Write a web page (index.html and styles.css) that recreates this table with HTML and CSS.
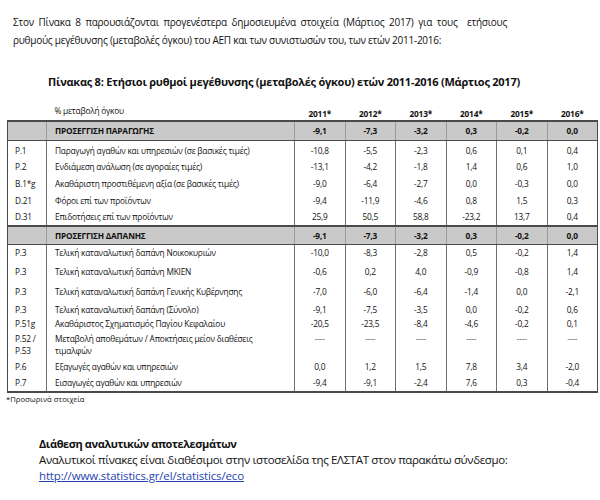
FILE: index.html
```html
<!DOCTYPE html>
<html lang="el">
<head>
<meta charset="utf-8">
<title>Πίνακας 8</title>
<link rel="stylesheet" href="styles.css">
</head>
<body>
<main class="page">
  <p class="intro">Στον Πίνακα 8 παρουσιάζονται προγενέστερα δημοσιευμένα στοιχεία (Μάρτιος 2017) για τους &nbsp;ετήσιους ρυθμούς μεγέθυνσης (μεταβολές όγκου) του ΑΕΠ και των συνιστωσών του, των ετών 2011-2016:</p>
  <h1 class="title">Πίνακας 8: Ετήσιοι ρυθμοί μεγέθυνσης (μεταβολές όγκου) ετών 2011-2016 (Μάρτιος 2017)</h1>
  <table class="growth">
    <colgroup>
      <col class="c-code"><col class="c-label"><col class="c-y"><col class="c-y"><col class="c-y"><col class="c-y"><col class="c-y"><col class="c-y">
    </colgroup>
    <thead>
      <tr class="head">
        <th></th><th class="unit">% μεταβολή όγκου</th>
        <th>2011*</th><th>2012*</th><th>2013*</th><th>2014*</th><th>2015*</th><th>2016*</th>
      </tr>
    </thead>
    <tbody>
      <tr class="group h18"><td></td><td class="label">ΠΡΟΣΕΓΓΙΣΗ ΠΑΡΑΓΩΓΗΣ</td><td>-9,1</td><td>-7,3</td><td>-3,2</td><td>0,3</td><td>-0,2</td><td>0,0</td></tr>
      <tr class="h19"><td class="code">P.1</td><td class="label">Παραγωγή αγαθών και υπηρεσιών (σε βασικές τιμές)</td><td>-10,8</td><td>-5,5</td><td>-2,3</td><td>0,6</td><td>0,1</td><td>0,4</td></tr>
      <tr class="h14"><td class="code">P.2</td><td class="label">Ενδιάμεση ανάλωση (σε αγοραίες τιμές)</td><td>-13,1</td><td>-4,2</td><td>-1,8</td><td>1,4</td><td>0,6</td><td>1,0</td></tr>
      <tr class="h19"><td class="code">B.1*g</td><td class="label">Ακαθάριστη προστιθέμενη αξία (σε βασικές τιμές)</td><td>-9,0</td><td>-6,4</td><td>-2,7</td><td>0,0</td><td>-0,3</td><td>0,0</td></tr>
      <tr class="h16"><td class="code">D.21</td><td class="label">Φόροι επί των προϊόντων</td><td>-9,4</td><td>-11,9</td><td>-4,6</td><td>0,8</td><td>1,5</td><td>0,3</td></tr>
      <tr class="h16"><td class="code">D.31</td><td class="label">Επιδοτήσεις επί των προϊόντων</td><td>25,9</td><td>50,5</td><td>58,8</td><td>-23,2</td><td>13,7</td><td>0,4</td></tr>
      <tr class="group h17"><td></td><td class="label">ΠΡΟΣΕΓΓΙΣΗ ΔΑΠΑΝΗΣ</td><td>-9,1</td><td>-7,3</td><td>-3,2</td><td>0,3</td><td>-0,2</td><td>0,0</td></tr>
      <tr class="h16"><td class="code">P.3</td><td class="label">Τελική καταναλωτική δαπάνη Νοικοκυριών</td><td>-10,0</td><td>-8,3</td><td>-2,8</td><td>0,5</td><td>-0,2</td><td>1,4</td></tr>
      <tr class="h21"><td class="code">P.3</td><td class="label">Τελική καταναλωτική δαπάνη ΜΚΙΕΝ</td><td>-0,6</td><td>0,2</td><td>4,0</td><td>-0,9</td><td>-0,8</td><td>1,4</td></tr>
      <tr class="h20"><td class="code">P.3</td><td class="label">Τελική καταναλωτική δαπάνη Γενικής Κυβέρνησης</td><td>-7,0</td><td>-6,0</td><td>-6,4</td><td>-1,4</td><td>0,0</td><td>-2,1</td></tr>
      <tr class="h15"><td class="code">P.3</td><td class="label">Τελική καταναλωτική δαπάνη (Σύνολο)</td><td>-9,1</td><td>-7,5</td><td>-3,5</td><td>0,0</td><td>-0,2</td><td>0,6</td></tr>
      <tr class="h14"><td class="code">P.51g</td><td class="label">Ακαθάριστος Σχηματισμός Παγίου Κεφαλαίου</td><td>-20,5</td><td>-23,5</td><td>-8,4</td><td>-4,6</td><td>-0,2</td><td>0,1</td></tr>
      <tr class="h28 top"><td class="code">P.52 /<br>P.53</td><td class="label">Μεταβολή αποθεμάτων / Αποκτήσεις μείον διαθέσεις τιμαλφών</td><td class="dash">----</td><td class="dash">----</td><td class="dash">----</td><td class="dash">----</td><td class="dash">----</td><td class="dash">----</td></tr>
      <tr class="h15"><td class="code">P.6</td><td class="label">Εξαγωγές αγαθών και υπηρεσιών</td><td>0,0</td><td>1,2</td><td>1,5</td><td>7,8</td><td>3,4</td><td>-2,0</td></tr>
      <tr class="h17 last"><td class="code">P.7</td><td class="label">Εισαγωγές αγαθών και υπηρεσιών</td><td>-9,4</td><td>-9,1</td><td>-2,4</td><td>7,6</td><td>0,3</td><td>-0,4</td></tr>
    </tbody>
  </table>
  <p class="note">*Προσωρινά στοιχεία</p>
  <section class="results">
    <h2 class="results-title">Διάθεση αναλυτικών αποτελεσμάτων</h2>
    <p class="results-text">Αναλυτικοί πίνακες είναι διαθέσιμοι στην ιστοσελίδα της ΕΛΣΤΑΤ στον παρακάτω σύνδεσμο:</p>
    <a class="results-link" href="#">http://www.statistics.gr/el/statistics/eco</a>
  </section>
</main>
</body>
</html>
```
FILE: styles.css
```css
html, body {
  margin: 0;
  padding: 0;
  background: #ffffff;
}
body {
  font-family: "Open Sans", "DejaVu Sans", sans-serif;
  color: #111111;
}
.page {
  width: 600px;
  height: 500px;
  overflow: hidden;
  padding-top: 13px;
  box-sizing: border-box;
}
.intro {
  margin: 0 0 0 13px;
  width: 494px;
  font-size: 10px;
  line-height: 18px;
  text-align: justify;
  letter-spacing: -0.25px;
}
.title {
  margin: 26px 0 0 48px;
  font-size: 11px;
  line-height: 14px;
  font-weight: 700;
  letter-spacing: -0.25px;
}
.growth {
  margin: 14px 0 0 7px;
  width: 590px;
  table-layout: fixed;
  border-collapse: collapse;
  font-size: 8.3px;
  letter-spacing: -0.2px;
}
.c-code { width: 39px; }
.c-label { width: 248px; }
.c-y { width: 50.5px; }
.growth th {
  font-weight: 700;
  height: 14px;
  padding: 0;
  line-height: 12px;
  text-align: center;
  vertical-align: bottom;
}
.growth th.unit {
  font-weight: 400;
  text-align: left;
  padding-left: 8px;
  padding-bottom: 3px;
}
.growth td {
  padding: 0;
  line-height: 12px;
  text-align: center;
  vertical-align: middle;
  border-left: 1px solid #707070;
  border-right: 1px solid #707070;
  white-space: nowrap;
}
.growth td.code {
  text-align: left;
  padding-left: 7px;
}
.growth td.label {
  text-align: left;
  padding-left: 8px;
  white-space: normal;
}
.growth td.dash {
  color: #555555;
}
.group td {
  background: #c9c9c9;
  font-weight: 700;
  border-top: 2px solid #4a4a4a;
  border-bottom: 1px solid #4a4a4a;
  border-left-color: #9a9a9a;
  border-right-color: #9a9a9a;
}
.growth tbody td:first-child { border-left: 1px solid #4a4a4a; }
.growth tbody td:last-child { border-right: 1px solid #4a4a4a; }
.last td { border-bottom: 2px solid #4a4a4a; }
.top td { vertical-align: top; padding-top: 2px; }
.top td.label { padding-right: 30px; }
.h14 td { height: 14px; }
.h15 td { height: 15px; }
.h16 td { height: 16px; }
.h17 td { height: 17px; }
.h18 td { height: 18px; }
.h19 td { height: 19px; }
.h20 td { height: 20px; }
.h21 td { height: 21px; }
.h28 td { height: 26px; }
.note {
  margin: 1px 0 0 6px;
  font-size: 7.7px;
  line-height: 10px;
}
.results {
  margin: 32px 0 0 39px;
  font-size: 11.5px;
  line-height: 16px;
}
.results-title {
  margin: 0;
  font-size: 11px;
  line-height: 16px;
  font-weight: 700;
  letter-spacing: -0.4px;
}
.results-text {
  margin: 0;
  letter-spacing: -0.35px;
}
.results-link {
  color: #1f45b0;
  text-decoration: underline;
  letter-spacing: -0.15px;
}
```
